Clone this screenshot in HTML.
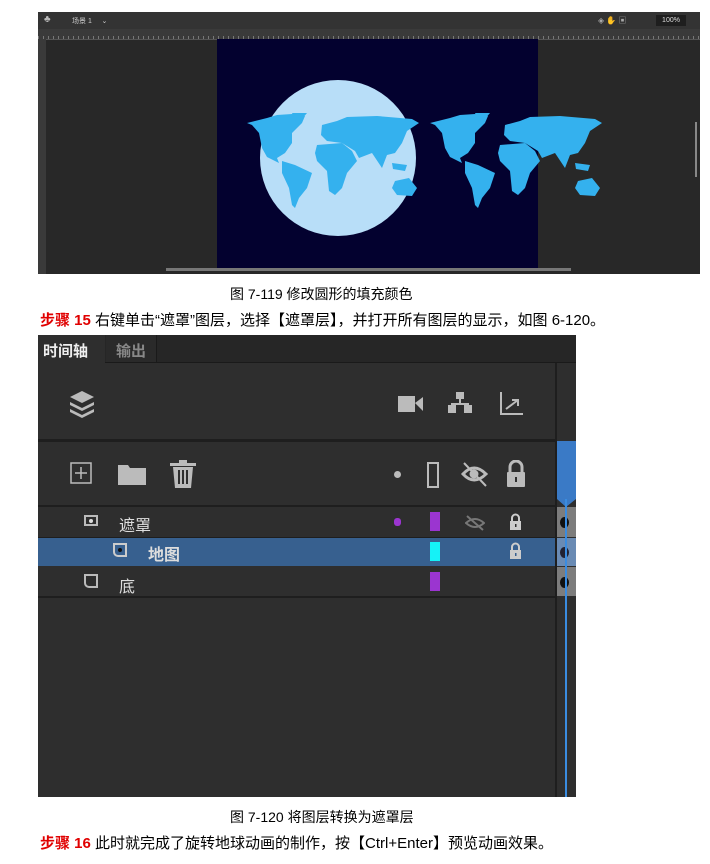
<!DOCTYPE html>
<html><head><meta charset="utf-8"><style>
body{margin:0;width:710px;height:864px;background:#fff;position:relative;overflow:hidden;font-family:"Liberation Sans","Noto Sans CJK SC",sans-serif}
.a{position:absolute}
.cap{font-size:14px;color:#000;white-space:nowrap}
.step{font-size:15px;color:#000;white-space:nowrap}
.step b{color:#e00000}
.w{color:#ddd;font-size:16px;font-weight:bold}
</style></head><body>
<div class="a" style="left:38px;top:12px;width:662px;height:262px;background:#282828;overflow:hidden">
 <div class="a" style="left:0;top:0;width:662px;height:17px;background:#333"></div>
 <div class="a" style="left:6px;top:2px;color:#bbb;font-size:10px">♣</div>
 <div class="a" style="left:34px;top:4px;color:#ccc;font-size:7px">场景 1 &nbsp;&nbsp;&nbsp;&nbsp;⌄</div>
 <div class="a" style="left:560px;top:3px;color:#aaa;font-size:8px">◈ ✋ ▣</div>
 <div class="a" style="left:618px;top:3px;width:30px;height:11px;background:#1e1e1e;color:#ddd;font-size:7px;line-height:11px;text-align:center">100%</div>
 <div class="a" style="left:0;top:17px;width:662px;height:10px;background:#3a3a3a;border-bottom:1px solid #555;background-image:repeating-linear-gradient(90deg,#777 0 1px,transparent 1px 5px);background-size:100% 3px;background-repeat:no-repeat;background-position:0 7px"></div>
 <div class="a" style="left:0;top:27px;width:8px;height:235px;background:#3a3a3a"></div>
 <div class="a" style="left:179px;top:27px;width:321px;height:229px;background:#03012f"></div>
 <svg class="a" style="left:0;top:0" width="662" height="262" viewBox="0 0 662 262">
  <defs><g id="wm" fill="#34b1ee">
   <path d="M0 10 L20 5 L30 2 L45 1 L58 3 L55 10 L45 20 L45 30 L38 40 L30 45 L32 50 L20 44 L15 35 L12 20 L5 12Z"/>
   <path d="M45 0 L60 0 L50 12Z"/>
   <path d="M35 48 L48 52 L65 60 L60 75 L52 85 L48 95 L45 92 L42 75 L35 60Z"/>
   <path d="M75 12 L90 8 L100 4 L130 3 L165 6 L172 10 L160 18 L155 30 L148 40 L140 42 L135 55 L125 40 L112 45 L108 38 L95 30 L80 28 L74 22Z"/>
   <path d="M70 32 L95 30 L105 38 L110 48 L100 60 L95 75 L88 82 L82 78 L80 58 L70 48 L68 40Z"/>
   <path d="M148 68 L162 65 L170 75 L165 83 L150 82 L145 75Z"/>
   <path d="M145 50 L160 52 L158 58 L146 56Z"/>
  </g></defs>
  <circle cx="300" cy="146" r="78" fill="#b8def8"/>
  <use href="#wm" x="209" y="101"/>
  <use href="#wm" x="392" y="101"/>
 </svg>
 <div class="a" style="left:128px;top:256px;width:405px;height:3px;background:#777"></div>
 <div class="a" style="left:657px;top:110px;width:2px;height:55px;background:#888"></div>
</div>
<div class="a cap" style="left:230px;top:284px">图 7-119 修改圆形的填充颜色</div>
<div class="a step" style="left:40px;top:309px"><b>步骤 15</b> 右键单击“遮罩”图层，选择【遮罩层】，并打开所有图层的显示，如图 6-120。</div>
<div class="a" style="left:38px;top:335px;width:538px;height:462px;background:#2e2e2e">
 <div class="a" style="left:0;top:0;width:538px;height:27px;background:#262626;border-bottom:1px solid #1a1a1a"></div>
 <div class="a" style="left:0;top:0;width:67px;height:28px;background:#2e2e2e"></div>
 <div class="a" style="left:5px;top:5px;color:#eee;font-size:15px;font-weight:bold">时间轴</div>
 <div class="a" style="left:68px;top:0;width:50px;height:27px;background:#2a2a2a;border-right:1px solid #1a1a1a"></div>
 <div class="a" style="left:78px;top:5px;color:#888;font-size:15px;font-weight:bold">输出</div>
 <div class="a" style="left:517px;top:28px;width:2px;height:434px;background:#1e1e1e"></div>
 <div class="a" style="left:0;top:104px;width:517px;height:3px;background:#1e1e1e"></div>
 <div class="a" style="left:0;top:170px;width:517px;height:2px;background:#1e1e1e"></div>
 <svg class="a" style="left:30px;top:54px" width="28" height="30" viewBox="0 0 28 30"><g fill="#bbb"><path d="M14 2 L26 8 L14 14 L2 8Z"/><path d="M2 13 L14 19 L26 13 L26 16 L14 22 L2 16Z"/><path d="M2 20 L14 26 L26 20 L26 23 L14 29 L2 23Z"/></g></svg>
 <svg class="a" style="left:360px;top:60px" width="26" height="18"><rect x="0" y="1" width="17" height="16" fill="#bbb"/><path d="M17 8 L25 2 L25 16 Z" fill="#bbb"/></svg>
 <svg class="a" style="left:410px;top:57px" width="24" height="24" fill="#bbb"><rect x="8" y="0" width="8" height="7"/><rect x="11" y="7" width="2" height="6"/><rect x="3" y="11" width="18" height="2"/><rect x="0" y="13" width="8" height="8"/><rect x="16" y="13" width="8" height="8"/><rect x="3" y="11" width="2" height="4"/><rect x="19" y="11" width="2" height="4"/></svg>
 <svg class="a" style="left:461px;top:57px" width="26" height="24" fill="none" stroke="#bbb" stroke-width="2"><path d="M2 0 V22 H24"/><path d="M7 17 L19 8 M13 8 H19 V14"/></svg>
 <svg class="a" style="left:32px;top:127px" width="22" height="22" fill="none" stroke="#bbb" stroke-width="1.5"><rect x="1" y="1" width="20" height="20"/><path d="M11 5 V17 M5 11 H17"/></svg>
 <svg class="a" style="left:80px;top:128px" width="28" height="22" fill="#bbb"><path d="M0 2 H10 L12 5 H28 V22 H0Z"/></svg>
 <svg class="a" style="left:132px;top:125px" width="26" height="28" fill="#bbb"><rect x="0" y="3" width="26" height="3"/><rect x="9" y="0" width="8" height="3"/><path d="M3 7 H23 L21 28 H5Z"/><g fill="#2e2e2e"><rect x="8" y="10" width="2" height="14"/><rect x="12" y="10" width="2" height="14"/><rect x="16" y="10" width="2" height="14"/></g></svg>
 <div class="a" style="left:356px;top:136px;width:7px;height:7px;border-radius:50%;background:#bbb"></div>
 <div class="a" style="left:389px;top:127px;width:8px;height:22px;border:2px solid #bbb"></div>
 <svg class="a" style="left:423px;top:127px" width="27" height="25" fill="none" stroke="#bbb" stroke-width="3"><path d="M2 12 Q13 0 25 12 Q13 24 2 12Z"/><circle cx="13" cy="12" r="3" fill="#bbb"/><path d="M3 1 L25 24" stroke-width="2"/></svg>
 <svg class="a" style="left:468px;top:125px" width="20" height="27"><path d="M4 12 V7 A6 6 0 0 1 16 7 V12" fill="none" stroke="#bbb" stroke-width="3"/><rect x="1" y="12" width="18" height="15" rx="1" fill="#bbb"/><rect x="9" y="17" width="2" height="5" fill="#2e2e2e"/></svg>
 <div class="a" style="left:519px;top:106px;width:19px;height:58px;background:#3a7ac6"></div>
 <div class="a" style="left:519px;top:164px;width:0;height:0;border-left:9px solid transparent;border-right:10px solid transparent;border-top:8px solid #3a7ac6"></div>
 <div class="a" style="left:0;top:172px;width:517px;height:30px;background:#2e2e2e;border-bottom:2px solid #1e1e1e"></div>
 <div class="a" style="left:0;top:203px;width:517px;height:28px;background:#37608f"></div>
 <div class="a" style="left:0;top:232px;width:517px;height:29px;background:#2e2e2e;border-bottom:2px solid #1e1e1e"></div>
 <div class="a" style="left:519px;top:172px;width:19px;height:30px;background:#7d7d7d"></div>
 <div class="a" style="left:519px;top:203px;width:19px;height:28px;background:#6a8bb4"></div>
 <div class="a" style="left:519px;top:232px;width:19px;height:29px;background:#7d7d7d"></div>
 <div class="a" style="left:522px;top:182px;width:9px;height:11px;border-radius:50%;background:#111"></div>
 <div class="a" style="left:522px;top:212px;width:9px;height:11px;border-radius:50%;background:#223"></div>
 <div class="a" style="left:522px;top:242px;width:9px;height:11px;border-radius:50%;background:#111"></div>
 <div class="a" style="left:527px;top:164px;width:2px;height:298px;background:#3a8ce0"></div>
 <div class="a" style="left:46px;top:180px;width:14px;height:11px;border:2px solid #bbb;box-sizing:border-box"></div>
 <div class="a" style="left:51px;top:184px;width:4px;height:4px;border-radius:50%;background:#ddd"></div>
 <div class="a w" style="left:81px;top:177px;font-weight:normal">遮罩</div>
 <div class="a" style="left:356px;top:183px;width:7px;height:8px;border-radius:3px;background:#9b35d0"></div>
 <div class="a" style="left:392px;top:177px;width:10px;height:19px;background:#9b35d0"></div>
 <svg class="a" style="left:427px;top:180px" width="20" height="16" fill="none" stroke="#777" stroke-width="2"><path d="M1 8 Q10 0 19 8 Q10 16 1 8Z"/><path d="M2 1 L18 15"/></svg>
 <svg class="a" style="left:471px;top:178px" width="13" height="17"><path d="M3 8 V5 A3.5 3.5 0 0 1 10 5 V8" fill="none" stroke="#ccc" stroke-width="2"/><rect x="1" y="8" width="11" height="9" fill="#ccc"/><rect x="6" y="11" width="1.5" height="3" fill="#2e2e2e"/></svg>
 <div class="a" style="left:75px;top:208px;width:14px;height:14px;border:2px solid #ccc;border-radius:0 0 0 5px;box-sizing:border-box"></div>
 <div class="a" style="left:80px;top:213px;width:4px;height:4px;border-radius:50%;background:#111"></div>
 <div class="a w" style="left:110px;top:206px">地图</div>
 <div class="a" style="left:392px;top:207px;width:10px;height:19px;background:#15f2f7"></div>
 <svg class="a" style="left:471px;top:207px" width="13" height="17"><path d="M3 8 V5 A3.5 3.5 0 0 1 10 5 V8" fill="none" stroke="#ccc" stroke-width="2"/><rect x="1" y="8" width="11" height="9" fill="#ccc"/><rect x="6" y="11" width="1.5" height="3" fill="#37608f"/></svg>
 <div class="a" style="left:46px;top:239px;width:14px;height:14px;border:2px solid #bbb;border-radius:0 0 0 5px;box-sizing:border-box"></div>
 <div class="a w" style="left:81px;top:238px;font-weight:normal">底</div>
 <div class="a" style="left:392px;top:237px;width:10px;height:19px;background:#9b35d0"></div>
</div>
<div class="a cap" style="left:230px;top:807px">图 7-120 将图层转换为遮罩层</div>
<div class="a step" style="left:40px;top:832px"><b>步骤 16</b> 此时就完成了旋转地球动画的制作，按【Ctrl+Enter】预览动画效果。</div>
</body></html>
